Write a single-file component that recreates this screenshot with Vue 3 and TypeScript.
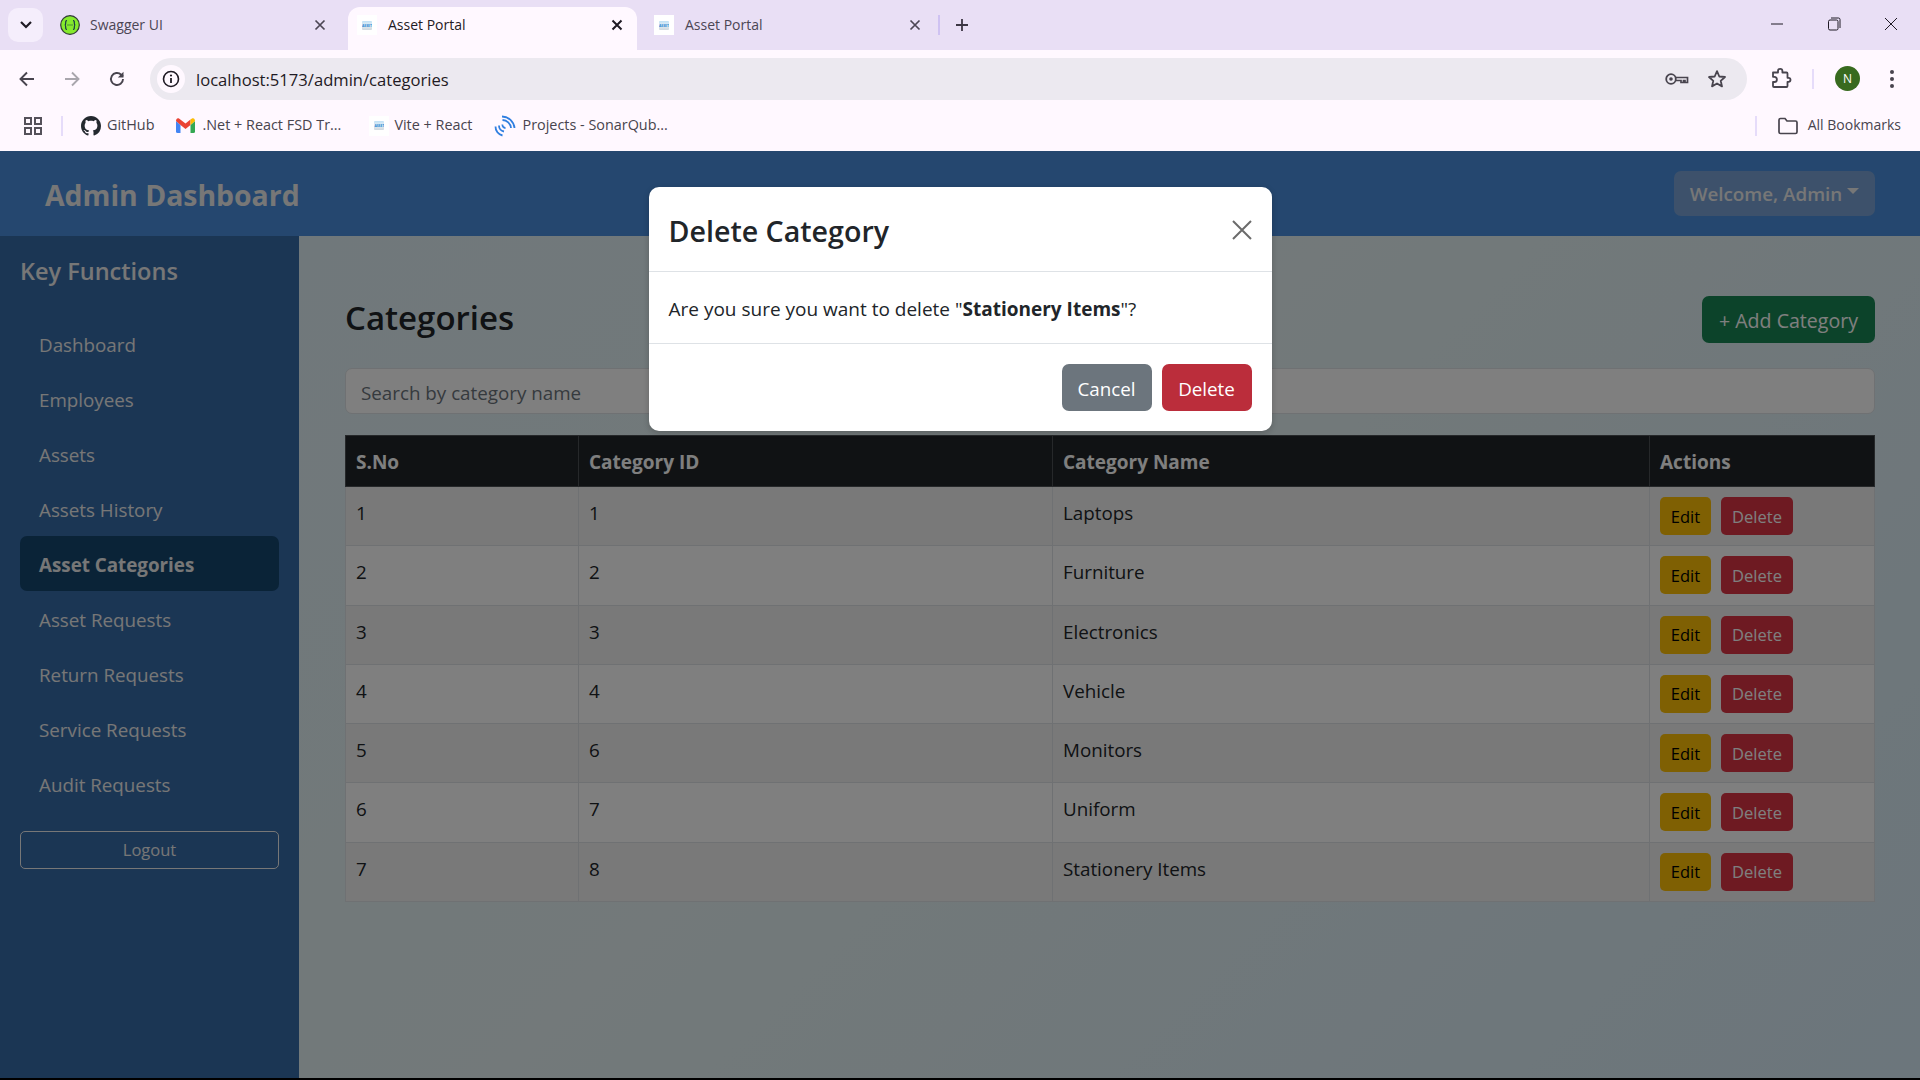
<template>
  <div class="screen">
    <header class="chrome">
      <div class="tabstrip">
        <button class="tab-search">
          <svg width="14" height="10" viewBox="0 0 14 10"><path d="M2 2l5 5 5-5" fill="none" stroke="#1f1a24" stroke-width="2.2" /></svg>
        </button>
        <div class="tab first">
          <svg class="fav" width="20" height="20" viewBox="0 0 20 20">
            <circle cx="10" cy="10" r="9.3" fill="#85ea2d" stroke="#2f3a35" stroke-width="1.2" />
            <path d="M7 5.500c-1.500 0-1.300 1.300-1.300 2.500 0 1.200-.4 2-1 2 .6 0 1 .8 1 2 0 1.200-.2 2.500 1.300 2.500M13 5.500c1.500 0 1.300 1.300 1.300 2.500 0 1.200.4 2 1 2-.6 0-1 .8-1 2 0 1.200.2 2.500-1.300 2.500" fill="none" stroke="#173647" stroke-width="1.200" />
            <path d="M7.500 10h1M9.500 10h1M11.500 10h1" stroke="#173647" stroke-width="1.200" />
          </svg>
          <span class="tab-title">Swagger UI</span>
          <svg class="tab-x" width="12" height="12" viewBox="0 0 12 12"><path d="M1.5 1.5l9 9M10.5 1.5l-9 9" stroke="#4c4654" stroke-width="1.7" /></svg>
        </div>
        <div class="tab active">
          <span class="asset-ico"><b>ASSET</b></span>
          <span class="tab-title">Asset Portal</span>
          <svg class="tab-x" width="12" height="12" viewBox="0 0 12 12"><path d="M1.5 1.5l9 9M10.5 1.5l-9 9" stroke="#1f1a24" stroke-width="2" /></svg>
        </div>
        <div class="tab third">
          <span class="asset-ico"><b>ASSET</b></span>
          <span class="tab-title">Asset Portal</span>
          <svg class="tab-x" width="12" height="12" viewBox="0 0 12 12"><path d="M1.5 1.5l9 9M10.5 1.5l-9 9" stroke="#4c4654" stroke-width="1.7" /></svg>
        </div>
        <span class="tab-sep"></span>
        <svg class="plus" width="14" height="14" viewBox="0 0 14 14"><path d="M7 1v12M1 7h12" stroke="#3c3644" stroke-width="1.8" /></svg>
        <div class="win-ctl">
          <svg width="14" height="14" viewBox="0 0 14 14"><path d="M1 7h12" stroke="#1f1a24" stroke-width="1" /></svg>
          <svg width="14" height="14" viewBox="0 0 14 14"><rect x="1.5" y="3" width="9.5" height="10" rx="1.5" fill="none" stroke="#1f1a24" /><path d="M4 1h7.5a1.5 1.5 0 0 1 1.5 1.5V11" fill="none" stroke="#1f1a24" /></svg>
          <svg width="14" height="14" viewBox="0 0 14 14"><path d="M1 1l12 12M13 1L1 13" stroke="#1f1a24" stroke-width="1" /></svg>
        </div>
      </div>

      <div class="toolbar">
        <svg class="nav-ico" width="20" height="20" viewBox="0 0 20 20"><path d="M17 10H4M10 3.5L3.5 10l6.5 6.5" fill="none" stroke="#48444e" stroke-width="1.9" /></svg>
        <svg class="nav-ico" width="20" height="20" viewBox="0 0 20 20"><path d="M3 10h13M10 3.5l6.5 6.5-6.5 6.5" fill="none" stroke="#a9a6ad" stroke-width="1.9" /></svg>
        <svg class="nav-ico" width="20" height="20" viewBox="0 0 20 20"><path d="M16 10a6 6 0 1 1-1.8-4.3L16 7.500" fill="none" stroke="#48444e" stroke-width="1.9" /><path d="M16.500 2.800v5.700h-5.700z" fill="#48444e" /></svg>
        <div class="omnibox">
          <span class="info-wrap">
            <svg width="18" height="18" viewBox="0 0 18 18"><circle cx="9" cy="9" r="7.500" fill="none" stroke="#1f1a24" stroke-width="1.600" /><path d="M9 8v5" stroke="#1f1a24" stroke-width="1.800" /><circle cx="9" cy="5.500" r="1.100" fill="#1f1a24" /></svg>
          </span>
          <span class="url">localhost:5173/admin/categories</span>
          <svg class="key" width="24" height="14" viewBox="0 0 24 14"><circle cx="6" cy="7" r="4.800" fill="none" stroke="#48444e" stroke-width="1.800" /><circle cx="6" cy="7" r="1.800" fill="#48444e" /><path d="M11 5.500h11.500v5h-2.500v-2h-1.500v2h-2.500v-2H11" fill="none" stroke="#48444e" stroke-width="1.700" /></svg>
          <svg class="star" width="20" height="20" viewBox="0 0 20 20"><path d="M10 2.200l2.300 5.300 5.700.5-4.300 3.800 1.300 5.600L10 14.500l-5 2.900 1.300-5.600L2 8l5.700-.5z" fill="none" stroke="#48444e" stroke-width="1.800" stroke-linejoin="round" /></svg>
        </div>
        <svg class="puzzle" width="22" height="22" viewBox="0 0 22 22"><path d="M3 5.500h5V4a2.200 2.200 0 0 1 4.400 0v1.500h4.100a1 1 0 0 1 1 1v4.300h1a2 2 0 0 1 0 4h-1v4.200a1 1 0 0 1-1 1H4a1 1 0 0 1-1-1v-4h1.300a2.600 2.600 0 0 0 0-5.200H3z" fill="none" stroke="#48444e" stroke-width="1.800" stroke-linejoin="round" /></svg>
        <span class="tool-sep"></span>
        <span class="avatar">N</span>
        <svg class="dots" width="6" height="22" viewBox="0 0 6 22"><circle cx="3" cy="4" r="2" fill="#48444e" /><circle cx="3" cy="11" r="2" fill="#48444e" /><circle cx="3" cy="18" r="2" fill="#48444e" /></svg>
      </div>

      <div class="bookmarks">
        <svg class="apps" width="20" height="20" viewBox="0 0 20 20"><g fill="none" stroke="#55515a" stroke-width="2"><rect x="2" y="2" width="6" height="6" /><rect x="12" y="2" width="6" height="6" /><rect x="2" y="12" width="6" height="6" /><rect x="12" y="12" width="6" height="6" /></g></svg>
        <span class="bm-sep"></span>
        <svg class="bm-ico gh" width="20" height="20" viewBox="0 0 16 16"><path fill="#24292f" d="M8 0C3.580 0 0 3.580 0 8c0 3.540 2.290 6.530 5.470 7.590.4.070.55-.17.55-.38 0-.19-.01-.82-.01-1.490-2.010.37-2.530-.49-2.690-.94-.09-.23-.48-.94-.82-1.130-.28-.15-.68-.52-.01-.53.63-.01 1.080.58 1.230.82.720 1.210 1.870.870 2.330.660.070-.520.280-.870.510-1.070-1.780-.200-3.640-.890-3.640-3.950 0-.870.310-1.590.820-2.150-.080-.200-.360-1.020.080-2.120 0 0 .670-.210 2.200.820.640-.180 1.320-.270 2-.270s1.360.090 2 .270c1.530-1.040 2.200-.820 2.200-.820.440 1.100.160 1.920.080 2.120.510.560.820 1.270.820 2.150 0 3.070-1.870 3.750-3.650 3.950.290.250.540.730.540 1.480 0 1.070-.010 1.930-.010 2.200 0 .210.150.460.550.380A8.013 8.013 0 0 0 16 8c0-4.420-3.580-8-8-8z" /></svg>
        <span class="bm-text github">GitHub</span>
        <svg class="bm-ico gm" width="19" height="15" viewBox="0 0 19 15">
          <path d="M0 3v10.500A1.500 1.500 0 0 0 1.500 15H4.500V7z" fill="#4285f4" />
          <path d="M19 3v10.500a1.500 1.500 0 0 1-1.500 1.500h-3V7z" fill="#34a853" />
          <path d="M0 3l4.500 4 5 4 5-4V1.500L9.500 5.500 3 .5C1.500-.5 0 .8 0 3z" fill="#ea4335" />
          <path d="M14.500 7L19 3c0-2.200-1.500-3.500-3-2.500l-1.500 1z" fill="#fbbc04" />
        </svg>
        <span class="bm-text gmail">.Net + React FSD Tr...</span>
        <span class="asset-ico bm-asset"><b>ASSET</b></span>
        <span class="bm-text vite">Vite + React</span>
        <svg class="bm-ico sonar" width="22" height="22" viewBox="0 0 22 22"><g fill="none" stroke="#2f7fe0" stroke-width="1.800"><path d="M1.500 11.500a9 9 0 0 0 7 9" /><path d="M5 10.500a6 6 0 0 0 5 6" /><path d="M8.500 9.500a3 3 0 0 0 3 3.500" /><path d="M8 1.500a12.500 12.500 0 0 1 12.500 11.500" /><path d="M8.500 5a9 9 0 0 1 8.500 8" /></g></svg>
        <span class="bm-text">Projects - SonarQub...</span>
        <span class="bm-spacer"></span>
        <span class="bm-sep right"></span>
        <svg class="folder" width="22" height="18" viewBox="0 0 22 18"><path d="M2 3a1.500 1.500 0 0 1 1.500-1.500H8l2 2.500h8.500A1.500 1.500 0 0 1 20 5.500V15a1.500 1.500 0 0 1-1.500 1.500h-15A1.500 1.500 0 0 1 2 15z" fill="none" stroke="#48444e" stroke-width="1.700" /></svg>
        <span class="bm-text all">All Bookmarks</span>
      </div>
    </header>

    <div class="page">
      <nav class="topbar">
        <span class="brand">Admin Dashboard</span>
        <button class="welcome">Welcome, Admin<i class="caret"></i></button>
      </nav>
      <div class="body-row">
        <aside class="sidebar">
          <h5 class="side-head">Key Functions</h5>
          <a v-for="l in links" :key="l" class="side-link" :class="{ on: l === 'Asset Categories' }">{{ l }}</a>
          <button class="logout">Logout</button>
        </aside>
        <main class="content">
          <div class="title-row">
            <h2>Categories</h2>
            <button class="add-btn">+ Add Category</button>
          </div>
          <input class="search" type="text" placeholder="Search by category name" />
          <table>
            <colgroup>
              <col style="width: 233px" />
              <col style="width: 474px" />
              <col style="width: 597px" />
              <col style="width: 225px" />
            </colgroup>
            <thead>
              <tr><th>S.No</th><th>Category ID</th><th>Category Name</th><th>Actions</th></tr>
            </thead>
            <tbody>
              <tr v-for="(c, i) in categories" :key="c.id">
                <td>{{ i + 1 }}</td>
                <td>{{ c.id }}</td>
                <td>{{ c.name }}</td>
                <td class="acts">
                  <button class="sm edit">Edit</button>
                  <button class="sm del">Delete</button>
                </td>
              </tr>
            </tbody>
          </table>
        </main>
      </div>

      <div class="backdrop">
        <div class="modal">
          <div class="m-head">
            <span class="m-title">Delete Category</span>
            <svg class="m-x" width="20" height="20" viewBox="0 0 20 20"><path d="M1 1l18 18M19 1L1 19" stroke="#6b6b6b" stroke-width="2" /></svg>
          </div>
          <div class="m-body">Are you sure you want to delete "<strong>{{ target }}</strong>"?</div>
          <div class="m-foot">
            <button class="m-btn cancel">Cancel</button>
            <button class="m-btn confirm">Delete</button>
          </div>
        </div>
      </div>
    </div>
  </div>
</template>

<script setup lang="ts">
const links: string[] = [
  'Dashboard',
  'Employees',
  'Assets',
  'Assets History',
  'Asset Categories',
  'Asset Requests',
  'Return Requests',
  'Service Requests',
  'Audit Requests'
]

const categories: { id: number; name: string }[] = [
  { id: 1, name: 'Laptops' },
  { id: 2, name: 'Furniture' },
  { id: 3, name: 'Electronics' },
  { id: 4, name: 'Vehicle' },
  { id: 6, name: 'Monitors' },
  { id: 7, name: 'Uniform' },
  { id: 8, name: 'Stationery Items' }
]

const target = 'Stationery Items'
</script>

<style>
html,
body {
  margin: 0;
  background: #000;
}
</style>

<style scoped>
.screen {
  width: 1920px;
  height: 1078px;
  overflow: hidden;
  display: flex;
  flex-direction: column;
  font-family: "Open Sans", "Noto Sans", sans-serif;
}
button {
  font-family: inherit;
  border: none;
}

/* browser chrome */
.chrome {
  flex: none;
  height: 151px;
  background: #fff8ff;
  color: #48444e;
}
.tabstrip {
  height: 50px;
  background: #e9dff5;
  display: flex;
  align-items: center;
  position: relative;
}
.tab-search {
  width: 35px;
  height: 34px;
  margin-left: 8px;
  background: #f5eefc;
  border-radius: 10px;
  display: flex;
  align-items: center;
  justify-content: center;
  padding: 0;
}
.tab {
  height: 43px;
  margin-top: 7px;
  box-sizing: border-box;
  display: flex;
  align-items: center;
  font-size: 14px;
  color: #4c4654;
  position: relative;
}
.tab .tab-title {
  flex: 1;
  margin-top: -1px;
}
.tab.first {
  width: 305px;
  padding: 0 22px 7px 17px;
}
.tab.first .fav {
  margin-right: 10px;
}
.tab.active {
  width: 289px;
  padding: 0 14px 7px 9px;
  background: #fff8ff;
  border-radius: 12px 12px 0 0;
  color: #1f1a24;
}
.tab.third {
  width: 300px;
  padding: 0 16px 7px 17px;
}
.asset-ico {
  width: 20px;
  height: 20px;
  background: #fff;
  display: inline-flex;
  align-items: center;
  justify-content: center;
  margin-right: 11px;
  flex: none;
}
.asset-ico b {
  font-size: 3.400px;
  line-height: 9px;
  width: 10px;
  text-align: center;
  overflow: hidden;
  color: #1f86d2;
  background: linear-gradient(#bfe0f5, #e3eef5 45%, #cfd8de);
  border-radius: 1px;
  font-weight: 700;
}
.tab-sep {
  width: 2px;
  height: 20px;
  background: #cfc2f2;
  margin-left: 1px;
}
.plus {
  margin-left: 15px;
}
.win-ctl {
  position: absolute;
  right: 22px;
  top: 17px;
  display: flex;
  gap: 43px;
}
.toolbar {
  height: 54px;
  display: flex;
  align-items: center;
  position: relative;
}
.nav-ico {
  margin-left: 25px;
  margin-top: 4px;
}
.nav-ico:first-child {
  margin-left: 17px;
}
.omnibox {
  margin-left: 23px;
  width: 1597px;
  height: 42px;
  margin-top: 4px;
  border-radius: 21px;
  background: #ece9f0;
  display: flex;
  align-items: center;
}
.info-wrap {
  width: 28px;
  height: 28px;
  margin-left: 7px;
  background: #fff8ff;
  border-radius: 50%;
  display: flex;
  align-items: center;
  justify-content: center;
}
.url {
  margin-left: 11px;
  font-size: 16.600px;
  color: #1f1a24;
  flex: 1;
}
.key {
  margin-right: 18px;
}
.star {
  margin-right: 20px;
}
.puzzle {
  margin-left: 23px;
  margin-top: 2px;
}
.tool-sep {
  width: 2px;
  height: 20px;
  background: #e6dcfa;
  margin-left: 20px;
  margin-top: 4px;
}
.avatar {
  width: 25px;
  height: 25px;
  border-radius: 50%;
  background: #386a1f;
  color: #fff;
  font-size: 12px;
  display: flex;
  align-items: center;
  justify-content: center;
  margin-left: 21px;
  margin-top: 2px;
}
.dots {
  margin-left: 29px;
  margin-top: 4px;
}
.bookmarks {
  height: 47px;
  display: flex;
  align-items: center;
  font-size: 14.400px;
  padding-bottom: 4px;
  box-sizing: border-box;
}
.bm-text {
  margin-top: -2px;
}
.apps {
  margin-left: 23px;
}
.bm-sep {
  width: 2px;
  height: 20px;
  background: #e6dcfa;
  margin-left: 18px;
}
.bm-sep.right {
  margin-right: 20px;
}
.bm-ico.gh {
  margin-left: 18px;
}
.bm-text.github {
  margin-left: 6px;
}
.bm-ico.gm {
  margin-left: 22px;
}
.bm-text.gmail {
  margin-left: 7px;
}
.bm-asset {
  margin-left: 28px;
  margin-right: 5px;
}
.sonar {
  margin-left: 22px;
  margin-right: 6px;
}
.bm-spacer {
  flex: 1;
}
.folder {
  margin-right: 9px;
}
.bm-text.all {
  margin-right: 19px;
  font-size: 14px;
}

/* app */
.page {
  flex: 1;
  position: relative;
  display: flex;
  flex-direction: column;
  background: linear-gradient(135deg, #dff0f8, #e6f3f4 50%, #d8ecf8);
}
.topbar {
  height: 85px;
  flex: none;
  box-sizing: border-box;
  background: #4a8ede;
  display: flex;
  align-items: center;
  justify-content: space-between;
  padding: 0 45px;
}
.brand {
  color: #eee;
  font-size: 28.400px;
  font-weight: 700;
  margin-top: 2px;
}
.welcome {
  width: 201px;
  height: 45px;
  border-radius: 7px;
  background: #7aa3d6;
  color: #eee;
  font-size: 18.800px;
  font-weight: 600;
  display: flex;
  align-items: center;
  justify-content: center;
  padding: 0;
}
.caret {
  width: 0;
  height: 0;
  border-left: 6px solid transparent;
  border-right: 6px solid transparent;
  border-top: 6px solid #eee;
  margin-left: 5px;
  margin-top: -5px;
}
.body-row {
  flex: 1;
  display: flex;
  min-height: 0;
}
.sidebar {
  width: 299px;
  flex: none;
  box-sizing: border-box;
  padding: 20px 20px 0;
  background: #366ca8;
}
.side-head {
  margin: 0 0 30px;
  font-size: 23.500px;
  line-height: 31px;
  font-weight: 600;
  color: #eee;
  height: 30px;
}
.side-link {
  display: block;
  height: 55px;
  line-height: 59px;
  padding-left: 19px;
  border-radius: 7px;
  font-size: 18.800px;
  color: #eee;
}
.side-link.on {
  background: #14466f;
  font-weight: 700;
}
.logout {
  display: block;
  width: 100%;
  height: 38px;
  margin-top: 20px;
  padding: 0 0 2px;
  background: transparent;
  border: 1px solid #eee;
  border-radius: 5px;
  color: #eee;
  font-size: 16.500px;
}
.content {
  flex: 1;
  box-sizing: border-box;
  padding: 60px 46px 0 46px;
}
.title-row {
  height: 47px;
  display: flex;
  align-items: center;
  justify-content: space-between;
}
.title-row h2 {
  margin: -4px 0 0;
  font-size: 33px;
  font-weight: 600;
  color: #212529;
}
.add-btn {
  width: 173px;
  height: 47px;
  padding: 2px 0 0;
  border-radius: 7px;
  background: #198754;
  color: #fff;
  font-size: 19.600px;
}
.search {
  display: block;
  width: 100%;
  box-sizing: border-box;
  height: 46px;
  margin: 25px 0 21px;
  padding: 3px 15px 0;
  background: #fff;
  border: 1px solid #dee2e6;
  border-radius: 7px;
  font-family: inherit;
  font-size: 18.800px;
}
.search::placeholder {
  color: #6c757d;
}
table {
  width: 1529px;
  table-layout: fixed;
  border-collapse: collapse;
  font-size: 18.800px;
  color: #212529;
}
th,
td {
  border: 1px solid #dee2e6;
  padding: 11px 10px 9px;
  text-align: left;
  vertical-align: top;
  line-height: 30px;
}
th {
  background: #212529;
  border-color: #4d5154;
  color: #fff;
  font-size: 19px;
  font-weight: 700;
  height: 30px;
}
td {
  height: 38.300px;
  background: #fff;
}
tbody tr:nth-child(odd) td {
  background: #f2f2f2;
}
td.acts {
  line-height: 0;
  padding-top: 10px;
  padding-bottom: 10px;
}
.sm {
  height: 38px;
  padding: 0;
  border-radius: 5px;
  font-size: 16.500px;
}
.edit {
  width: 51px;
  background: #ffc107;
  color: #000;
  margin-right: 10px;
}
.del {
  width: 72px;
  background: #dc3545;
  color: #fff;
}

/* modal */
.backdrop {
  position: absolute;
  inset: 0;
  background: rgba(0, 0, 0, 0.5);
  display: flex;
  justify-content: center;
  align-items: flex-start;
  padding-top: 36px;
}
.modal {
  width: 623px;
  background: #fff;
  border-radius: 10px;
  box-shadow: 0 2px 6px rgba(0, 0, 0, 0.2);
  color: #212529;
}
.m-head {
  height: 85px;
  box-sizing: border-box;
  padding: 2px 20px 0;
  border-bottom: 1px solid #dee2e6;
  display: flex;
  align-items: center;
  justify-content: space-between;
}
.m-title {
  font-size: 28.600px;
  font-weight: 600;
}
.m-body {
  height: 72px;
  box-sizing: border-box;
  padding: 2px 20px 0;
  display: flex;
  align-items: center;
  white-space: pre;
  border-bottom: 1px solid #dee2e6;
  font-size: 19px;
}
.m-foot {
  height: 87px;
  box-sizing: border-box;
  padding: 20px 20px 0;
  display: flex;
  justify-content: flex-end;
  gap: 10px;
}
.m-btn {
  width: 90px;
  height: 47px;
  border-radius: 7px;
  color: #fff;
  font-size: 18.800px;
  padding: 2px 0 0;
}
.cancel {
  background: #6c757d;
}
.confirm {
  background: #bb2d3b;
}
</style>
